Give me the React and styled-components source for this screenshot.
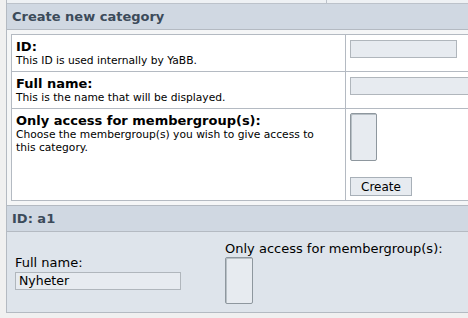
import React from "react";
import styled, { createGlobalStyle } from "styled-components";

const GlobalStyle = createGlobalStyle`
  html, body {
    margin: 0;
    padding: 0;
    background: #f0f0f0;
    overflow: hidden;
  }
  body {
    font-family: "DejaVu Sans", Verdana, sans-serif;
    color: #000;
  }
`;

const Pagina = styled.div`
  padding-left: 6px;
  width: 600px;
`;

const Ventana = styled.div`
  border-left: 1px solid #b4bac2;
  background: #f5f6f7;
`;

const Tira = styled.div`
  display: flex;
  height: 3px;
  border-bottom: 1px solid #bcc2ca;
  background: #eef1f4;
`;

const TiraCelda = styled.div`
  width: ${props => props.ancho}px;
  border-right: 1px solid #bcc2ca;
`;

const Cabecera = styled.div`
  height: 25px;
  line-height: 25px;
  padding-left: 5px;
  background: #d0d8e2;
  color: #3c4b5a;
  font-size: 13px;
  font-weight: bold;
  border-top: ${props => (props.borde ? "1px solid #b4bac2" : "0")};
  border-bottom: 1px solid #b4bac2;
`;

const Tabla = styled.div`
  margin: 4px 0 4px 4px;
  border: 1px solid #b4bac2;
  background: #fff;
`;

const Fila = styled.div`
  display: flex;
  & + & {
    border-top: 1px solid #b4bac2;
  }
`;

const CeldaTexto = styled.div`
  width: 325px;
  padding: 4px 4px;
  border-right: 1px solid #b4bac2;
`;

const CeldaCampo = styled.div`
  flex: 1;
  padding: 4px 4px;
  display: flex;
  flex-direction: column;
  align-items: flex-start;
  gap: 16px;
`;

const Etiqueta = styled.div`
  font-size: 13px;
  font-weight: bold;
  line-height: 15px;
`;

const Nota = styled.div`
  font-size: 10.7px;
  line-height: 13px;
  max-width: ${props => (props.ancho ? `${props.ancho}px` : "none")};
`;

const Campo = styled.input`
  box-sizing: border-box;
  width: ${props => props.ancho}px;
  height: 18px;
  margin: 1px 0 0;
  padding: 0 3px;
  background: #e7ebf0;
  border: 1px solid #b0b6bc;
  font-family: "DejaVu Sans", Verdana, sans-serif;
  font-size: 12.5px;
  color: #000;
  outline: 0;
`;

const Lista = styled.select`
  box-sizing: border-box;
  width: ${props => props.ancho}px;
  height: ${props => props.alto}px;
  margin: 0;
  padding: 0;
  background: #e7ebf0;
  border: 1px solid #8e979e;
  box-shadow: inset 1px 1px 0 #b8c0c6;
  outline: 0;
`;

const Boton = styled.button`
  box-sizing: border-box;
  width: 62px;
  height: 19px;
  padding: 0;
  background: #e7ebf0;
  border: 1px solid #a8b0b8;
  font-family: "DejaVu Sans", Verdana, sans-serif;
  font-size: 12px;
  color: #000;
  cursor: pointer;
`;

const Panel = styled.div`
  display: flex;
  align-items: center;
  height: 80px;
  background: #dee4eb;
  border-bottom: 1px solid #b4bac2;
`;

const PanelCelda = styled.div`
  width: ${props => (props.ancho ? `${props.ancho}px` : "auto")};
  padding-left: ${props => props.izq || 0}px;
  display: flex;
  flex-direction: column;
  align-items: flex-start;
`;

const EtiquetaSimple = styled.div`
  font-size: 13px;
  line-height: 15px;
  margin-bottom: 1px;
`;

const App = () => (
  <Pagina>
    <GlobalStyle />
    <Ventana>
      <Tira>
        <TiraCelda ancho={319} />
      </Tira>
      <Cabecera>Create new category</Cabecera>
      <Tabla>
        <Fila>
          <CeldaTexto>
            <Etiqueta>ID:</Etiqueta>
            <Nota>This ID is used internally by YaBB.</Nota>
          </CeldaTexto>
          <CeldaCampo>
            <Campo ancho={107} />
          </CeldaCampo>
        </Fila>
        <Fila>
          <CeldaTexto>
            <Etiqueta>Full name:</Etiqueta>
            <Nota>This is the name that will be displayed.</Nota>
          </CeldaTexto>
          <CeldaCampo>
            <Campo ancho={160} />
          </CeldaCampo>
        </Fila>
        <Fila>
          <CeldaTexto>
            <Etiqueta>Only access for membergroup(s):</Etiqueta>
            <Nota ancho={300}>Choose the membergroup(s) you wish to give access to this category.</Nota>
          </CeldaTexto>
          <CeldaCampo>
            <Lista multiple ancho={27} alto={48} />
            <Boton>Create</Boton>
          </CeldaCampo>
        </Fila>
      </Tabla>
      <Cabecera borde>ID: a1</Cabecera>
      <Panel>
        <PanelCelda ancho={210} izq={8}>
          <EtiquetaSimple>Full name:</EtiquetaSimple>
          <Campo ancho={166} defaultValue="Nyheter" />
        </PanelCelda>
        <PanelCelda>
          <EtiquetaSimple>Only access for membergroup(s):</EtiquetaSimple>
          <Lista multiple ancho={28} alto={47} />
        </PanelCelda>
      </Panel>
    </Ventana>
  </Pagina>
);

export default App;
